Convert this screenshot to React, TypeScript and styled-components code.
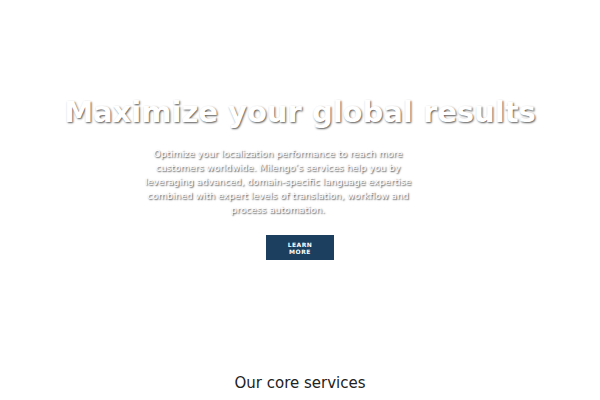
import styled, { createGlobalStyle } from 'styled-components';

const GlobalStyle = createGlobalStyle`
	html, body {
		margin: 0;
		padding: 0;
		background: #ffffff;
		font-family: "DejaVu Sans", Verdana, sans-serif;
	}
`;

const Page = styled.div`
	width: 600px;
	display: flex;
	flex-direction: column;
	align-items: center;
`;

const Hero = styled.section`
	width: 100%;
	height: 340px;
	display: flex;
	flex-direction: column;
	align-items: center;
	padding-top: 92px;
	box-sizing: border-box;
`;

const Title = styled.h1`
	margin: 0;
	font-size: 29px;
	font-weight: bold;
	line-height: 40px;
	color: #ffffff;
	text-shadow: 1px 1px 2px rgba(0, 0, 0, 0.65);
	white-space: nowrap;
`;

const Lead = styled.p`
	margin: 15px 0 0 -44px;
	width: 276px;
	font-size: 9.2px;
	font-weight: normal;
	line-height: 14px;
	text-align: center;
	color: #ffffff;
	text-shadow: 1px 1px 1.5px rgba(0, 0, 0, 0.75);
`;

const Button = styled.button`
	margin-top: 18px;
	width: 68px;
	height: 25px;
	border: none;
	background: #1c3f60;
	color: #ffffff;
	font-family: "DejaVu Sans", Verdana, sans-serif;
	font-size: 6px;
	font-weight: bold;
	letter-spacing: 0.5px;
	line-height: 7px;
	padding: 0;
	cursor: pointer;
`;

const SectionTitle = styled.h2`
	margin: 34px 0 0;
	font-size: 15px;
	font-weight: normal;
	color: #222222;
`;

export default function App() {
	return (
		<>
			<GlobalStyle />
			<Page>
				<Hero>
					<Title>Maximize your global results</Title>
					<Lead>
						Optimize your localization performance to reach more customers worldwide. Milengo’s
						services help you by leveraging advanced, domain-specific language expertise combined
						with expert levels of translation, workflow and process automation.
					</Lead>
					<Button>LEARN<br />MORE</Button>
				</Hero>
				<SectionTitle>Our core services</SectionTitle>
			</Page>
		</>
	);
}
